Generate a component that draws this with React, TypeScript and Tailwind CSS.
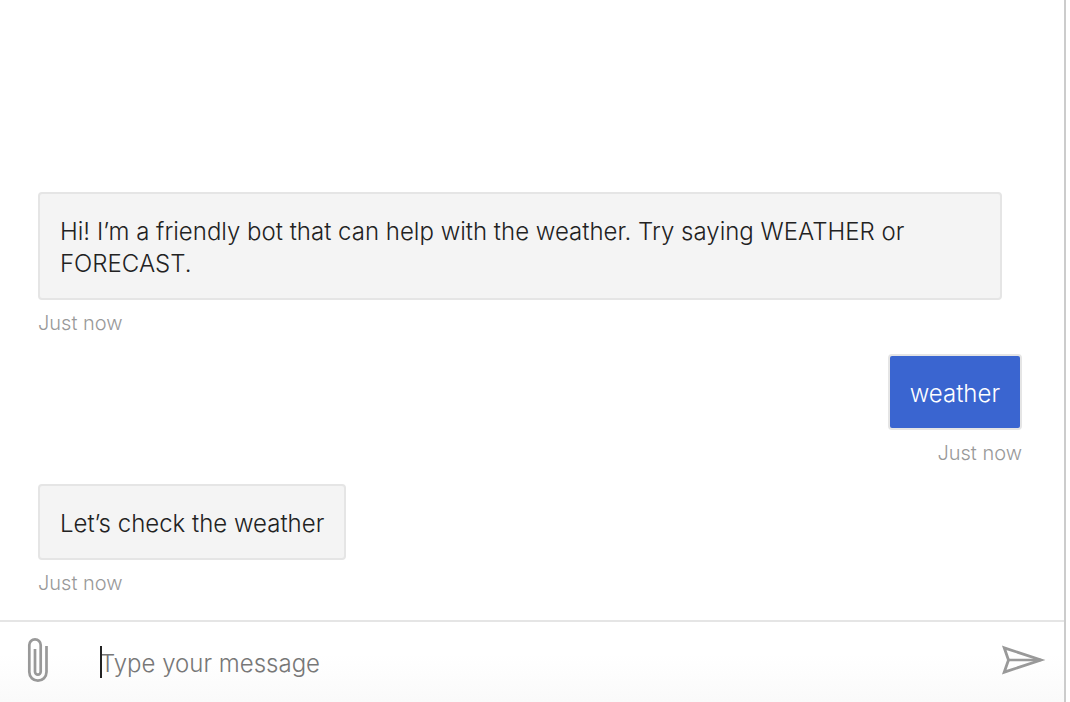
import { useState } from 'react';

type Message = { id: number; from: 'bot' | 'user'; text: string; time: string };

const messages: Message[] = [
  {
    id: 1,
    from: 'bot',
    text: 'Hi! I’m a friendly bot that can help with the weather. Try saying WEATHER or FORECAST.',
    time: 'Just now',
  },
  { id: 2, from: 'user', text: 'weather', time: 'Just now' },
  { id: 3, from: 'bot', text: 'Let’s check the weather', time: 'Just now' },
];

function PaperclipIcon() {
  return (
    <svg width="24" height="48" viewBox="0 0 24 48" fill="none" stroke="#999999" strokeWidth="2.7" aria-hidden="true">
      <path d="M20.5 10V36.1a8.6 8.6 0 0 1-17.2 0V9.1a5.7 5.7 0 0 1 11.4 0V35.8a2.85 2.85 0 0 1-5.7 0V13" />
    </svg>
  );
}

function SendIcon() {
  return (
    <svg width="46" height="32" viewBox="0 0 46 32" fill="none" stroke="#999999" strokeWidth="2.8" aria-hidden="true">
      <path d="M4.2 3.8L41 16L4.2 28.2L8.5 16Z" />
      <path d="M8.5 16H41" strokeWidth="2.4" />
    </svg>
  );
}

function ChatMessage({ message }: { message: Message }) {
  const isUser = message.from === 'user';
  return (
    <li className={isUser ? 'flex flex-col items-end' : 'flex flex-col items-start'}>
      <p
        className={
          isUser
            ? 'rounded border-2 border-[#e5e5e5] bg-[#3a65d0] px-5 pt-[22px] pb-[18px] text-2xl leading-8 text-white'
            : 'mr-5 rounded border-2 border-[#e5e5e5] bg-[#f4f4f4] px-5 pt-[22px] pb-[18px] text-2xl leading-8 text-[#222222]'
        }
      >
        {message.text}
      </p>
      <span className="pt-2 text-xl leading-[30px] text-[#999999]">{message.time}</span>
    </li>
  );
}

export default function App() {
  const [draft, setDraft] = useState('');

  return (
    <div className="min-h-screen bg-white pr-1 font-['Inter',sans-serif] font-light">
      <main className="flex min-h-screen flex-col border-r-2 border-[#cccccc]">
        <ul className="flex flex-1 flex-col justify-end gap-4 pr-[42px] pb-[22px] pl-[38px]">
          {messages.map((message) => (
            <ChatMessage key={message.id} message={message} />
          ))}
        </ul>
        <form
          className="flex h-[82px] items-center border-t-2 border-[#e5e5e5] bg-linear-to-b from-white from-40% to-[#fafafa] pr-[18px] pl-[26px]"
          onSubmit={(event) => {
            event.preventDefault();
            setDraft('');
          }}
        >
          <button type="button" aria-label="Attach a file" className="pb-1">
            <PaperclipIcon />
          </button>
          <div className="relative ml-[50px] flex-1">
            <input
              type="text"
              aria-label="Message"
              placeholder="Type your message"
              value={draft}
              onChange={(event) => setDraft(event.target.value)}
              className="h-8 w-full bg-transparent pt-1 text-2xl leading-8 text-[#222222] caret-transparent outline-none placeholder:text-[#777777]"
            />
            <span className="pointer-events-none absolute top-0 left-0 h-8 w-0.5 bg-[#222222]" />
          </div>
          <button type="submit" aria-label="Send message" className="pb-1">
            <SendIcon />
          </button>
        </form>
      </main>
    </div>
  );
}
